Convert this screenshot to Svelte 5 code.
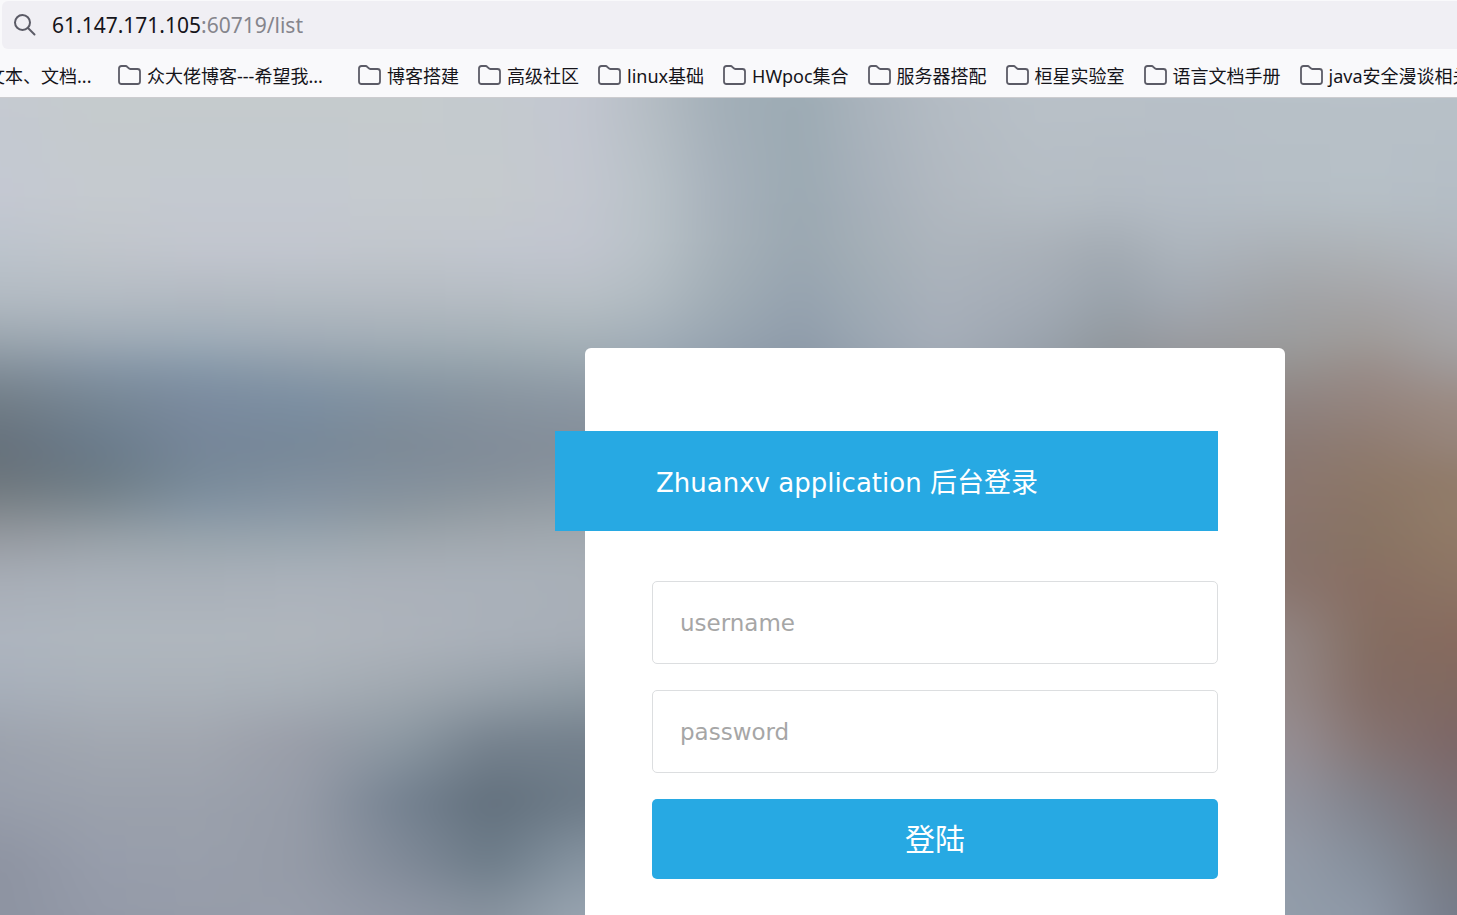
<script>
  let username = $state('');
  let password = $state('');

  const bookmarks = [
    { label: '众大佬博客---希望我...', long: true },
    { label: '博客搭建' },
    { label: '高级社区' },
    { label: 'linux基础' },
    { label: 'HWpoc集合' },
    { label: '服务器搭配' },
    { label: '桓星实验室' },
    { label: '语言文档手册' },
    { label: 'java安全漫谈相关' }
  ];

  // Backdrop colours: each band is a horizontal gradient that fades into the next one.
  const leftX = [0, 100, 200, 300, 400, 490, 580];
  const midX = [650, 720, 800, 860, 940, 1040, 1110, 1180];
  const rightX = [1290, 1370, 1457];

  const bands = [
    { y: 0, left: 'c5cad1 c5cbcd c5cbcd c5cbcd c5cbcd c4cacf c3c7d1', mid: 'b5bdc4 a3afb8 9cabb4 a9b3bc b4bcc4 b9c1c8 b9c1c8 b8c0c8', right: 'b8c1c8 b8c1c8 b8c1c8' },
    { y: 102, left: 'c4c8d2 c5cacf c4c9d0 c4c9d0 c5cacf c5cacd c3c7d0', mid: 'b9c2c8 a7b1bb 9ba9b2 a5afb9 b1b8c0 b5bdc4 b3bbc3 b4bcc5', right: 'b5bec5 b6bfc6 b4bdc5' },
    { y: 152, left: 'bcc4cc c0c5cb c2c6cf c2c6cf c1c6cc c1c6cf c1c5cf', mid: 'b8c1c7 a6b1b9 9aa7b1 a3aeb6 adb5bd aab1b9 a3abb3 adb5bd', right: 'abb0b6 aeb3b7 b1b7be' },
    { y: 202, left: 'b2bac2 b3bbc3 b2b9c1 b3bbc2 b4bbc2 b5bcc3 b7bfc5', mid: 'b0bac1 a0acb5 95a2af 9eaab4 a9b1bb a3abb5 99a2ab a2a9b2', right: 'a1a3a6 a5a4a6 aaaab0' },
    { y: 244, left: '9aa5ae 9da9b4 9dabb7 a0abb6 a2adb6 a3afb6 a6b1b8', mid: 'a2aeb8 98a5b1 8f9caa 9aa6b2 a6aeb9 9ba4ae 92999f 9a9ca2', right: '9b9c9d 9f9a97 a5a4a5' },
    { y: 272, left: '838f9a 8494a4 8597a8 8c9ba9 909fa9 93a0aa 98a4ad', mid: '98a5b1 8f9caa 8895a4 939fab 9fa8b3 949da7 8b9298 939496', right: '95918f 998c88 9f9999' },
    { y: 302, left: '727e88 778795 7b8b9f 7c8fa2 8291a0 88949f 8b97a3', right: '8f8482 95857f 9c8c84' },
    { y: 347, left: '66717c 6a7b8b 768699 778899 7d8a96 818c99 848e99', right: '8a7a74 8f7b70 96847a' },
    { y: 382, left: '6c757c 6d7c86 788a99 7f8e9d 828f9c 85909a 8b959f', right: '8a766f 8d7868 917b69' },
    { y: 412, left: '80878c 808c94 8595a4 8997a5 8c979f 939ca3 979fa6', right: '8a756d 8a7465 927d6a' },
    { y: 442, left: '979ba2 99a2a9 99a5ad 9aa6af 9ea7ae a1a8af a3abb2', right: '87736b 887463 917966' },
    { y: 482, left: 'a8aeb7 a9b0b9 a9b0b9 abb2bb abb1ba aab1ba a9b0b8', right: '89746d 896e62 8c7564' },
    { y: 542, left: 'aeb5bf afb7be b0b7be b0b6bd adb3bb a9b0b9 a7aeb7', right: '918482 846d61 876a5e' },
    { y: 592, left: 'a7afba aab1ba aab1b9 a7afb7 a0a8b0 97a1aa 8f9ba4', right: '948887 836c65 806960' },
    { y: 642, left: '9da3ae a2a8b1 a2a7b0 9a9ea9 8d99a3 77838f 74818d', right: '968e93 857472 7c6666' },
    { y: 702, left: '989eab 9ba1ac 9ba1ac 969ca8 758291 62707d 6c7a87', right: '92949f 80818a 7a6e73' },
    { y: 762, left: '8e94a2 979dab 999fab 959ba7 808a98 6c7b88 8593a0', right: '939ba8 858e9b 77787f' },
    { y: 817, left: '8d93a1 949aa8 969ca9 979daa 8f96a4 87929e 98a4b0', right: '929daa 8e98a7 757b89' }
  ];

  function stops(band) {
    const pair = (xs, text) => (text ? text.split(' ').map((c, i) => ({ x: xs[i] / 1457, color: '#' + c })) : []);
    return [...pair(leftX, band.left), ...pair(midX, band.mid), ...pair(rightX, band.right)];
  }
</script>

<div class="window">
  <header>
    <label class="address">
      <svg class="search" viewBox="0 0 24 24" aria-hidden="true">
        <circle cx="9.5" cy="9.5" r="7.5" />
        <path d="M15 15 21.5 21.5" />
      </svg>
      <span class="url" role="textbox" tabindex="0" aria-label="Address"><b>61.147.171.105</b>:60719/list</span>
    </label>
    <nav aria-label="Bookmarks">
      <a class="bookmark" href="#top"><span class="cut">文本、文档...</span></a>
      {#each bookmarks as item}
        <a class="bookmark" href="#top">
          <svg class="folder" viewBox="0 0 23 20" aria-hidden="true">
            <path d="M3.5 1H7.6Q8.6 1 9.3 1.8L10.6 3.2Q11.3 4 12.3 4H19.5Q22 4 22 6.5V16.5Q22 19 19.5 19H3.5Q1 19 1 16.5V3.5Q1 1 3.5 1Z" />
          </svg>
          <span class:long={item.long}>{item.label}</span>
        </a>
      {/each}
    </nav>
  </header>

  <main>
    <svg class="backdrop" viewBox="0 0 1457 817" preserveAspectRatio="none" aria-hidden="true">
      <defs>
        <filter id="soft" filterUnits="userSpaceOnUse" x="-60" y="-60" width="1577" height="937" color-interpolation-filters="sRGB">
          <feGaussianBlur stdDeviation="18 14" />
        </filter>
        {#each bands as band, i}
          <linearGradient id="color{i}" gradientUnits="userSpaceOnUse" x1="0" y1="0" x2="1457" y2="0">
            {#each stops(band) as stop}
              <stop offset={stop.x} stop-color={stop.color} />
            {/each}
          </linearGradient>
          {#if i > 0}
            <linearGradient id="fade{i}" gradientUnits="userSpaceOnUse" x1="0" y1={bands[i - 1].y} x2="0" y2={band.y}>
              <stop offset="0" stop-color="#fff" stop-opacity="0" />
              <stop offset="1" stop-color="#fff" />
            </linearGradient>
            <mask id="mask{i}" maskUnits="userSpaceOnUse" x="-60" y="-60" width="1577" height="937" style:mask-type="alpha">
              <rect x="-60" y="-60" width="1577" height="937" fill="url(#fade{i})" />
            </mask>
          {/if}
        {/each}
      </defs>
      <g filter="url(#soft)">
        {#each bands as band, i}
          <rect x="-60" y="-60" width="1577" height="937" fill="url(#color{i})" mask={i > 0 ? `url(#mask${i})` : undefined} />
        {/each}
      </g>
    </svg>

    <section class="card">
      <h1>Zhuanxv application <span>后台登录</span></h1>
      <form onsubmit={(e) => e.preventDefault()}>
        <input type="text" placeholder="username" aria-label="username" bind:value={username} />
        <input type="password" placeholder="password" aria-label="password" bind:value={password} />
        <button type="submit">登陆</button>
      </form>
    </section>
  </main>
</div>

<style>
  :global(body) {
    margin: 0;
  }

  .window {
    display: flex;
    flex-direction: column;
    min-height: 100vh;
    overflow: hidden;
    font-family: 'Noto Sans', 'Noto Sans CJK SC', sans-serif;
  }

  header {
    background: #f9f9fb;
    border-bottom: 1px solid #cccccf;
  }

  .address {
    display: flex;
    align-items: center;
    gap: 15px;
    height: 48px;
    margin: 1px 0 0 2px;
    padding-left: 11px;
    background: #f0eff4;
    border-radius: 6px 0 0 6px;
  }

  .search {
    width: 24px;
    height: 24px;
    fill: none;
    stroke: #5b5b66;
    stroke-width: 2;
    stroke-linecap: round;
  }

  .url {
    font-size: 21px;
    line-height: 30px;
    color: #85858c;
    outline: none;
  }

  .url b {
    font-weight: 400;
    color: #15141a;
  }

  nav {
    display: flex;
    gap: 19px;
    height: 48px;
    padding-top: 4px;
    box-sizing: border-box;
    margin-left: -13px;
    overflow: hidden;
  }

  .bookmark {
    display: flex;
    flex: none;
    align-items: center;
    gap: 6px;
    height: 46px;
    font-size: 18px;
    line-height: 26px;
    color: #15141a;
    text-decoration: none;
    white-space: nowrap;
  }

  .cut {
    width: 112px;
  }

  .long {
    width: 192px;
  }

  .folder {
    width: 23px;
    height: 20px;
    margin-bottom: 2px;
    fill: none;
    stroke: #5b5b66;
    stroke-width: 1.8;
  }

  main {
    position: relative;
    display: grid;
    flex: 1;
    grid-template-columns: 585fr 700fr 172fr;
    padding-top: 250px;
    background: #a9b0b9;
  }

  .backdrop {
    position: absolute;
    inset: 0;
    width: 100%;
    height: 100%;
  }

  .card {
    position: relative;
    grid-column: 2;
    padding: 83px 67px 36px;
    background: #fff;
    border-radius: 6px 6px 0 0;
    font-family: 'DejaVu Sans', 'Noto Sans CJK SC', sans-serif;
  }

  h1 {
    margin: 0 0 50px -97px;
    padding: 4px 0 0 101px;
    background: #27a9e3;
    color: #fff;
    font-size: 26px;
    font-weight: 400;
    line-height: 96px;
    white-space: nowrap;
  }

  h1 span {
    font-size: 27px;
  }

  form {
    display: grid;
    gap: 26px;
  }

  input {
    box-sizing: border-box;
    width: 100%;
    height: 83px;
    padding: 0 27px;
    border: 1px solid #dcdee0;
    border-radius: 5px;
    background: #fff;
    color: #333;
    font: 23px 'DejaVu Sans', 'Noto Sans CJK SC', sans-serif;
    outline: none;
  }

  input::placeholder {
    color: #a6a6a6;
    opacity: 1;
  }

  button {
    height: 80px;
    padding: 0 0 4px;
    border: 0;
    border-radius: 5px;
    background: #27a9e3;
    color: #fff;
    font: 30px 'Noto Sans CJK SC', sans-serif;
    cursor: pointer;
  }
</style>
